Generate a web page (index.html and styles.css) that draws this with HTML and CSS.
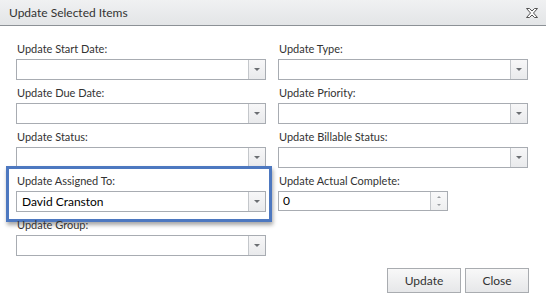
FILE: index.html
```html
<!DOCTYPE html>
<html lang="en">
  <head>
    <meta charset="UTF-8" />
    <title>Update Selected Items</title>
    <link rel="stylesheet" href="styles.css">
  </head>
  <body>
    <div class="dialog">
      <div class="titlebar">
        <span class="title">Update Selected Items</span>
        <svg class="close-icon" width="12" height="10" viewBox="0 0 12 10">
          <polygon points="0.5,0.5 3.5,0.5 6,3 8.5,0.5 11.5,0.5 7.5,5 11.5,9.5 8.5,9.5 6,7 3.5,9.5 0.5,9.5 4.5,5"
                   fill="#fafafa" stroke="#555" stroke-width="1" stroke-linejoin="round" />
        </svg>
      </div>

      <div class="content">
        <div class="fields">
          <div class="field">
            <label>Update Start Date:</label>
            <div class="combo"><span class="value"></span><span class="arrow"></span></div>
          </div>
          <div class="field">
            <label>Update Type:</label>
            <div class="combo"><span class="value"></span><span class="arrow"></span></div>
          </div>

          <div class="field">
            <label>Update Due Date:</label>
            <div class="combo"><span class="value"></span><span class="arrow"></span></div>
          </div>
          <div class="field">
            <label>Update Priority:</label>
            <div class="combo"><span class="value"></span><span class="arrow"></span></div>
          </div>

          <div class="field">
            <label>Update Status:</label>
            <div class="combo"><span class="value"></span><span class="arrow"></span></div>
          </div>
          <div class="field">
            <label>Update Billable Status:</label>
            <div class="combo"><span class="value"></span><span class="arrow"></span></div>
          </div>

          <div class="field">
            <label>Update Assigned To:</label>
            <div class="combo"><span class="value">David Cranston</span><span class="arrow"></span></div>
            <div class="highlight"></div>
          </div>
          <div class="field">
            <label>Update Actual Complete:</label>
            <div class="numeric">
              <span class="value">0</span>
              <span class="spin"><span class="up"></span><span class="down"></span></span>
            </div>
          </div>

          <div class="field">
            <label>Update Group:</label>
            <div class="combo"><span class="value"></span><span class="arrow"></span></div>
          </div>
        </div>

        <div class="actions">
          <button class="btn btn-update">Update</button>
          <button class="btn btn-close">Close</button>
        </div>
      </div>
    </div>
  </body>
</html>
```

FILE: styles.css
```css
body {
  margin: 0;
  background: #ffffff;
  font-family: Lato, "Open Sans", sans-serif;
  color: #333;
}
.dialog {
  width: 546px;
  height: 306px;
  background: #ffffff;
}
.titlebar {
  height: 25px;
  display: flex;
  align-items: center;
  justify-content: space-between;
  padding: 0 8px 0 9px;
  background: linear-gradient(#f0f1f2, #e3e5e7);
  border-bottom: 1px solid #8c9196;
}
.title {
  font-size: 12px;
  color: #333;
  margin-top: -1px;
}
.close-icon {
  display: block;
}
.content {
  padding: 10px 0 0 16px;
}
.fields {
  display: grid;
  grid-template-columns: 250px 250px;
  column-gap: 12px;
}
.field {
  position: relative;
}
label {
  display: block;
  font-size: 11px;
  line-height: 15px;
  margin: 5px 0 3px 1px;
  color: #333;
}
.combo,
.numeric {
  display: flex;
  height: 19px;
  border: 1px solid #a8acb2;
  background: #fff;
}
.numeric {
  width: 168px;
  height: 18px;
  margin-top: 1px;
}
.value {
  flex: 1;
  font-size: 12px;
  line-height: 19px;
  padding-left: 5px;
  color: #000;
}
.numeric .value {
  line-height: 18px;
  padding-left: 4px;
}
.arrow {
  width: 16px;
  border-left: 1px solid #c4c7cb;
  background: linear-gradient(#f7f7f8, #e9eaec);
  position: relative;
}
.arrow::after {
  content: "";
  position: absolute;
  left: 5px;
  top: 8px;
  border-left: 3px solid transparent;
  border-right: 3px solid transparent;
  border-top: 3px solid #6b6e72;
}
.spin {
  width: 16px;
  border-left: 1px solid #c4c7cb;
  background: linear-gradient(#f9f9fa, #eeeff0);
  display: flex;
  flex-direction: column;
}
.spin .up,
.spin .down {
  flex: 1;
  position: relative;
}
.spin .up::after,
.spin .down::after {
  content: "";
  position: absolute;
  left: 6px;
  border-left: 2px solid transparent;
  border-right: 2px solid transparent;
}
.spin .up::after {
  top: 4px;
  border-bottom: 2px solid #9a9da1;
}
.spin .down::after {
  top: 3px;
  border-top: 2px solid #9a9da1;
}
.highlight {
  position: absolute;
  left: -10px;
  right: -6px;
  top: -2px;
  bottom: -10px;
  border: 3px solid #4d78c0;
  box-shadow: 1px 3px 4px rgba(0, 0, 0, 0.35);
  pointer-events: none;
}
.actions {
  display: flex;
  justify-content: flex-end;
  gap: 4px;
  margin-top: 12px;
  padding-right: 17px;
}
.btn {
  height: 25px;
  font-family: Lato, "Open Sans", sans-serif;
  font-size: 12px;
  color: #333;
  border: 1px solid #a9acb0;
  background: linear-gradient(#f8f8f8, #e6e7e9);
  padding: 0;
}
.btn-update {
  width: 74px;
}
.btn-close {
  width: 64px;
}
```
